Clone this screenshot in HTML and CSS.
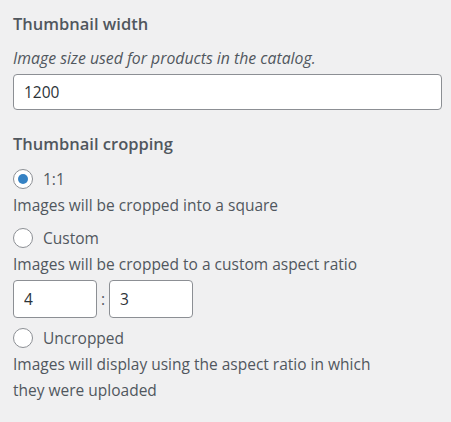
FILE: index.html
```html
<!DOCTYPE html>
<html lang="en">
<head>
  <meta charset="UTF-8">
  <meta name="viewport" content="width=device-width, initial-scale=1.0">
  <title>Thumbnail settings</title>
  <link rel="stylesheet" href="styles.css">
</head>
<body>
  <div class="panel">
    <div class="field">
      <label class="field-title" for="thumb-width">Thumbnail width</label>
      <p class="help">Image size used for products in the catalog.</p>
      <input type="text" id="thumb-width" class="text-input" value="1200">
    </div>

    <div class="field">
      <div class="field-title">Thumbnail cropping</div>

      <label class="radio-row">
        <input type="radio" name="crop" value="1:1" checked>
        <span>1:1</span>
      </label>
      <p class="option-help">Images will be cropped into a square</p>

      <label class="radio-row">
        <input type="radio" name="crop" value="custom">
        <span>Custom</span>
      </label>
      <p class="option-help">Images will be cropped to a custom aspect ratio</p>
      <div class="ratio">
        <input type="text" class="ratio-input" value="4">
        <span class="ratio-sep">:</span>
        <input type="text" class="ratio-input" value="3">
      </div>

      <label class="radio-row">
        <input type="radio" name="crop" value="uncropped">
        <span>Uncropped</span>
      </label>
      <p class="option-help wrap">Images will display using the aspect ratio in which they were uploaded</p>
    </div>
  </div>
</body>
</html>
```

FILE: styles.css
```css
body {
  margin: 0;
  background-color: #f0f0f1;
  color: #50575e;
  font-family: "Open Sans", "Noto Sans", sans-serif;
  font-size: 15.5px;
}
.panel {
  padding: 12px 9px 0 13px;
}
.field {
  margin-bottom: 22px;
}
.field-title {
  display: block;
  font-size: 16.5px;
  font-weight: 600;
  line-height: 24px;
  color: #50575e;
}
.help {
  margin: 10px 0 4px;
  font-size: 15.8px;
  font-style: italic;
  line-height: 24px;
}
.text-input {
  display: block;
  box-sizing: border-box;
  width: 100%;
  height: 36px;
  padding: 0 10px;
  border: 1px solid #8c8f94;
  border-radius: 4px;
  background: #fff;
  color: #2c3338;
  font-family: inherit;
  font-size: 15.5px;
}
.radio-row {
  display: flex;
  align-items: center;
  gap: 10px;
  margin-top: 8px;
  height: 24px;
}
.field-title + .radio-row {
  margin-top: 11px;
}
.radio-row input {
  appearance: none;
  margin: 0;
  width: 20px;
  height: 20px;
  border: 1px solid #8c8f94;
  border-radius: 50%;
  background: #fff;
  box-sizing: border-box;
  display: grid;
  place-items: center;
}
.radio-row input:checked::before {
  content: "";
  width: 10px;
  height: 10px;
  border-radius: 50%;
  background: #3582c4;
}
.option-help {
  margin: 1px 0 0;
  line-height: 26px;
}
.wrap {
  max-width: 372px;
}
.ratio {
  display: flex;
  align-items: center;
  gap: 4px;
  margin: 3px 0 4px;
}
.ratio-input {
  box-sizing: border-box;
  width: 84px;
  height: 38px;
  padding: 0 10px;
  border: 1px solid #8c8f94;
  border-radius: 4px;
  background: #fff;
  color: #2c3338;
  font-family: inherit;
  font-size: 15.5px;
}
.ratio-sep {
  width: 4px;
  text-align: center;
}
```
